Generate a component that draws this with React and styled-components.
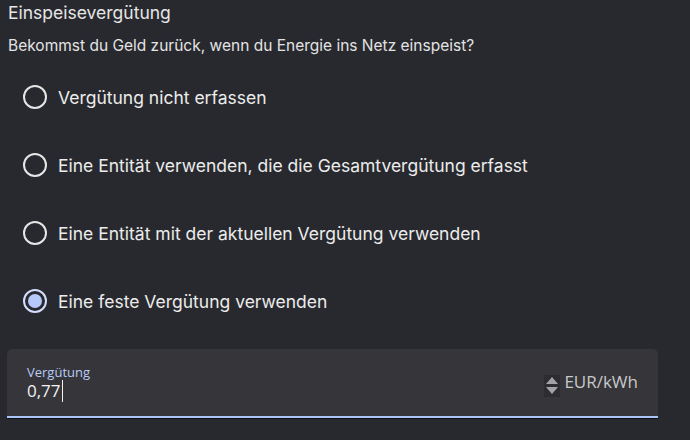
import React from "react";
import styled, { createGlobalStyle } from "styled-components";

const GlobalStyle = createGlobalStyle`
  html, body {
    margin: 0;
    padding: 0;
    background: #28292e;
  }
  body {
    width: 690px;
    height: 440px;
    overflow: hidden;
    font-family: Inter, "Open Sans", sans-serif;
    color: #e3e3e3;
  }
`;

const Page = styled.main`
  display: flex;
  flex-direction: column;
  padding: 0 32px 0 7px;
`;

const Title = styled.h2`
  margin: 1px 0 0 1px;
  font-size: 17.5px;
  font-weight: 400;
  line-height: 24px;
  color: #e6e6e6;
`;

const Subtitle = styled.p`
  margin: 11px 0 0 1px;
  font-size: 15.5px;
  line-height: 20px;
  color: #e3e3e3;
`;

const Options = styled.div`
  display: flex;
  flex-direction: column;
  margin-top: 29px;
  gap: 44px;
`;

const Option = styled.label`
  display: flex;
  align-items: center;
  gap: 11px;
  padding-left: 16px;
  height: 24px;
  font-size: 17.5px;
  color: #ececec;
`;

const Radio = styled.span`
  box-sizing: border-box;
  width: 24px;
  height: 24px;
  border-radius: 50%;
  border: 2px solid ${(p) => (p.checked ? "#d3defc" : "#e6e6e6")};
  display: flex;
  align-items: center;
  justify-content: center;

  &::after {
    content: "";
    width: 14px;
    height: 14px;
    border-radius: 50%;
    background: ${(p) => (p.checked ? "#b6c9fb" : "transparent")};
  }
`;

const Field = styled.div`
  margin-top: 36px;
  height: 67px;
  background: #35353a;
  border-radius: 5px 5px 0 0;
  border-bottom: 2px solid #a9c4f9;
  box-shadow: 0 1px 0 #111;
  display: flex;
  align-items: center;
  padding: 0 20px 0 20px;
`;

const FieldBody = styled.div`
  flex: 1;
  display: flex;
  flex-direction: column;
  margin-top: 3px;
`;

const FieldLabel = styled.span`
  font-family: "Open Sans", sans-serif;
  font-size: 13px;
  line-height: 14px;
  color: #b9cbf4;
`;

const Value = styled.span`
  font-family: "Open Sans", sans-serif;
  font-size: 17px;
  line-height: 24px;
  color: #f2f2f2;
  display: flex;
  align-items: center;

  &::after {
    content: "";
    width: 1px;
    height: 22px;
    margin-left: 1px;
    background: #f2f2f2;
  }
`;

const Spinner = styled.div`
  width: 16px;
  height: 22px;
  background: #2d2d31;
  display: flex;
  flex-direction: column;
  align-items: center;
  justify-content: space-evenly;
  margin-top: 6px;
`;

const Arrow = styled.span`
  width: 0;
  height: 0;
  border-left: 6px solid transparent;
  border-right: 6px solid transparent;
  ${(p) =>
    p.up
      ? "border-bottom: 7px solid #a3a3a3;"
      : "border-top: 7px solid #a3a3a3;"}
`;

const Suffix = styled.span`
  font-family: "Open Sans", sans-serif;
  font-size: 17px;
  color: #c9c9c9;
  margin: 0 0 3px 4px;
`;

const options = [
  "Vergütung nicht erfassen",
  "Eine Entität verwenden, die die Gesamtvergütung erfasst",
  "Eine Entität mit der aktuellen Vergütung verwenden",
  "Eine feste Vergütung verwenden",
];

export default function App() {
  return (
    <>
      <GlobalStyle />
      <Page>
        <Title>Einspeisevergütung</Title>
        <Subtitle>Bekommst du Geld zurück, wenn du Energie ins Netz einspeist?</Subtitle>
        <Options>
          {options.map((text, i) => (
            <Option key={text}>
              <Radio checked={i === 3} />
              {text}
            </Option>
          ))}
        </Options>
        <Field>
          <FieldBody>
            <FieldLabel>Vergütung</FieldLabel>
            <Value>0,77</Value>
          </FieldBody>
          <Spinner>
            <Arrow up />
            <Arrow />
          </Spinner>
          <Suffix>EUR/kWh</Suffix>
        </Field>
      </Page>
    </>
  );
}
